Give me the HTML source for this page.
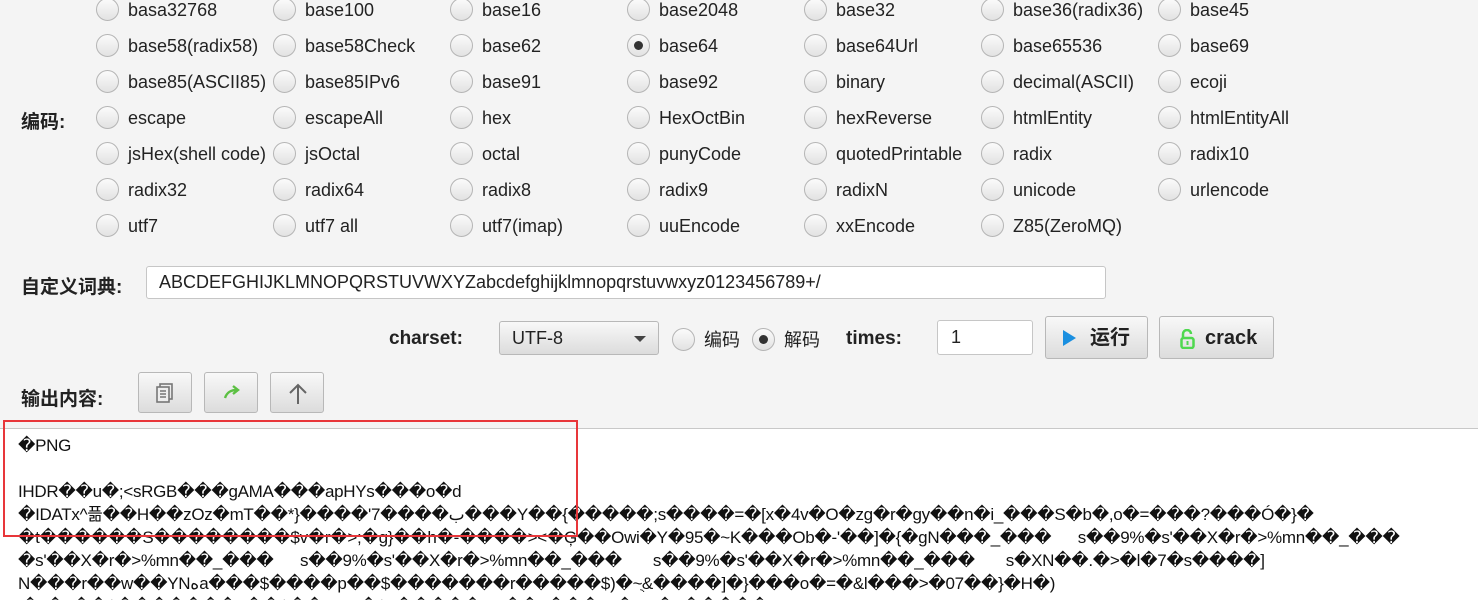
<!DOCTYPE html>
<html><head><meta charset="utf-8"><style>
html,body{margin:0;width:1478px;height:600px;overflow:hidden}
body{background:#f4f4f4;font-family:"Liberation Sans","Noto Sans CJK SC",sans-serif;color:#222;position:relative}
.r{position:absolute;font-size:18px;line-height:22px;white-space:nowrap}
.r i{position:absolute;left:-32px;top:-1px;width:23px;height:23px;border-radius:50%;border:1px solid #b5b5b5;background:linear-gradient(#fbfbfb,#e2e2e2);box-sizing:border-box}
.r i.on::after{content:"";position:absolute;left:6px;top:6px;width:9px;height:9px;border-radius:50%;background:#333}
.lbl{position:absolute;font-weight:bold;font-size:19px}
.btn{position:absolute;border:1px solid #b8b8b8;border-radius:3px;background:linear-gradient(#f8f8f8,#dcdcdc);box-sizing:border-box}
.out{position:absolute;left:0;top:428px;width:1478px;height:172px;background:#fff;border-top:1px solid #c8c8c8;overflow:hidden}
.out pre{margin:0;position:absolute;left:18px;top:5px;font-family:"Liberation Sans","Noto Sans CJK SC",sans-serif;font-size:17px;line-height:23px;color:#111;letter-spacing:-0.3px}
</style></head><body>
<div id="g"></div>
<div class="lbl" style="left:21px;top:107px">编码:</div>
<div class="lbl" style="left:21px;top:272px">自定义词典:</div>
<div style="position:absolute;left:146px;top:266px;width:960px;height:33px;background:#fff;border:1px solid #c6c6c6;border-radius:3px;box-sizing:border-box;font-size:18px;line-height:31px;padding-left:12px">ABCDEFGHIJKLMNOPQRSTUVWXYZabcdefghijklmnopqrstuvwxyz0123456789+/</div>
<div class="lbl" style="left:389px;top:328px">charset:</div>
<div class="btn" style="left:499px;top:321px;width:160px;height:34px;font-size:18px;line-height:32px;padding-left:12px">UTF-8<span style="position:absolute;right:12px;top:14px;border:6px solid transparent;border-top:6px solid #444;border-bottom:0"></span></div>
<div class="r" style="left:704px;top:329px"><i></i>编码</div>
<div class="r" style="left:784px;top:329px"><i class="on"></i>解码</div>
<div class="lbl" style="left:846px;top:328px">times:</div>
<div style="position:absolute;left:937px;top:320px;width:96px;height:35px;background:#fff;border:1px solid #c6c6c6;border-radius:3px;box-sizing:border-box;font-size:18px;line-height:33px;padding-left:13px">1</div>
<div class="btn" style="left:1045px;top:316px;width:103px;height:43px;font-size:20px;font-weight:bold;line-height:43px;padding-left:44px"><span style="position:absolute;left:17px;top:13px;border:8px solid transparent;border-left:13px solid #1a8fe0;border-right:0"></span>运行</div>
<div class="btn" style="left:1159px;top:316px;width:115px;height:43px;font-size:20px;font-weight:bold;line-height:43px;padding-left:45px"><svg style="position:absolute;left:20px;top:12px" width="15" height="20" viewBox="0 0 15 20"><path d="M3 9V5a4 4 0 0 1 8 0" fill="none" stroke="#4fd84f" stroke-width="2.5"/><rect x="1.5" y="9" width="12" height="10" rx="2" fill="none" stroke="#4fd84f" stroke-width="2.5"/><rect x="6.5" y="12" width="2" height="4" fill="#4fd84f"/></svg>crack</div>
<div class="lbl" style="left:21px;top:384px">输出内容:</div>
<div class="btn" style="left:138px;top:372px;width:54px;height:41px"><svg style="position:absolute;left:15px;top:9px" width="22" height="22" viewBox="0 0 22 22" fill="none" stroke="#777" stroke-width="1.6"><rect x="6" y="2" width="12" height="15"/><rect x="3" y="5" width="12" height="15" fill="#eee"/><path d="M6 9h6M6 12h6M6 15h6"/></svg></div>
<div class="btn" style="left:204px;top:372px;width:54px;height:41px"><svg style="position:absolute;left:16px;top:10px" width="22" height="20" viewBox="0 0 22 20"><path d="M4 15c2-6 6-8 12-8M12 3l5 4-5 4" fill="none" stroke="#5cc043" stroke-width="2.4"/></svg></div>
<div class="btn" style="left:270px;top:372px;width:54px;height:41px"><svg style="position:absolute;left:15px;top:9px" width="24" height="24" viewBox="0 0 24 24"><path d="M12 22V3M4 11l8-8 8 8" fill="none" stroke="#666" stroke-width="2"/></svg></div>
<div class="out"><pre>�PNG

IHDR��u�;&lt;sRGB���gAMA���apHYs���o�d
�IDATx^픎��H��zOz�mT��*}����'7����ب���Y��{�����;s����=�[x�4v�O�zg�r�gy��n�i_���S�b�,o�=���?���Ó�}�
�t������S��������$v�r�&gt;;�g}��h�-����&gt;&lt;�Ģ��Owi�Y�95�~K���Ob�-'��]�{�gN���_���      s��9%�s'��X�r�&gt;%mn��_���
�s'��X�r�&gt;%mn��_���      s��9%�s'��X�r�&gt;%mn��_���       s��9%�s'��X�r�&gt;%mn��_���       s�XN��.�&gt;�l�7�s����]
N���r��w��YNهa���$����p��$�������r�����$)�~ֻ&amp;����]�}���o�=�&amp;l���&gt;�07��}�H�)
l�;i�_��$�������p��$��M#m�$u�����mp��_���_s�XN�7�����</pre></div>
<div style="position:absolute;left:3px;top:420px;width:571px;height:113px;border:2px solid #e8363a"></div>
<script>
var rows=[["basa32768","base100","base16","base2048","base32","base36(radix36)","base45"],
["base58(radix58)","base58Check","base62","base64","base64Url","base65536","base69"],
["base85(ASCII85)","base85IPv6","base91","base92","binary","decimal(ASCII)","ecoji"],
["escape","escapeAll","hex","HexOctBin","hexReverse","htmlEntity","htmlEntityAll"],
["jsHex(shell code)","jsOctal","octal","punyCode","quotedPrintable","radix","radix10"],
["radix32","radix64","radix8","radix9","radixN","unicode","urlencode"],
["utf7","utf7 all","utf7(imap)","uuEncode","xxEncode","Z85(ZeroMQ)"]];
var h="";rows.forEach(function(r,i){r.forEach(function(t,j){h+='<div class="r" style="left:'+(128+177*j)+'px;top:'+(-1+36*i)+'px"><i'+(t=="base64"?' class="on"':'')+'></i>'+t+'</div>';});});
document.getElementById("g").innerHTML=h;
</script>
</body></html>
